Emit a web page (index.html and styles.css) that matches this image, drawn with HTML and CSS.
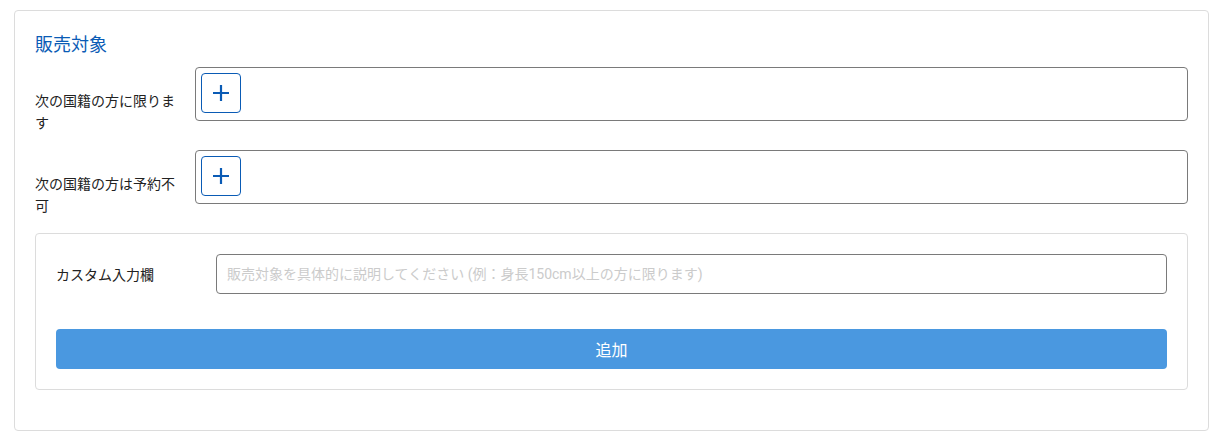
FILE: index.html
```html
<!DOCTYPE html>
<html lang="ja">
<head>
<meta charset="utf-8">
<link rel="stylesheet" href="styles.css">
</head>
<body>
<div class="card">
  <h2 class="title">販売対象</h2>
  <div class="row">
    <div class="label">次の国籍の方に限ります</div>
    <div class="tagbox">
      <button class="plus" type="button" aria-label="追加">
        <svg width="20" height="20" viewBox="0 0 20 20"><path d="M10 2v16M2 10h16" stroke="#0a5bb5" stroke-width="2.2" fill="none"/></svg>
      </button>
    </div>
  </div>
  <div class="row">
    <div class="label">次の国籍の方は予約不可</div>
    <div class="tagbox">
      <button class="plus" type="button" aria-label="追加">
        <svg width="20" height="20" viewBox="0 0 20 20"><path d="M10 2v16M2 10h16" stroke="#0a5bb5" stroke-width="2.2" fill="none"/></svg>
      </button>
    </div>
  </div>
  <div class="inner">
    <div class="field">
      <div class="flabel">カスタム入力欄</div>
      <input class="input" type="text" placeholder="販売対象を具体的に説明してください (例：身長150cm以上の方に限ります)">
    </div>
    <button class="add" type="button">追加</button>
  </div>
</div>
</body>
</html>
```
FILE: styles.css
```css
* { box-sizing: border-box; }
body {
  margin: 0;
  padding: 10px 16px 10px 14px;
  background: #fff;
  font-family: Roboto, "Noto Sans CJK JP", "Noto Sans", sans-serif;
  color: #222;
}
.card {
  border: 1px solid #dcdcdc;
  border-radius: 4px;
  padding: 20px;
  height: 421px;
}
.title {
  margin: 0 0 8px 0;
  font-size: 18px;
  font-weight: 400;
  line-height: 28px;
  color: #0a5bb5;
}
.row {
  display: flex;
  align-items: flex-start;
  margin-bottom: 16px;
}
.label {
  width: 160px;
  flex: none;
  padding-right: 15px;
  padding-top: 23px;
  font-size: 14px;
  line-height: 22px;
  color: #222;
}
.tagbox {
  flex: 1;
  height: 54px;
  border: 1px solid #7a7a7a;
  border-radius: 4px;
  padding: 5px;
  display: flex;
  align-items: flex-start;
}
.plus {
  width: 40px;
  height: 40px;
  border: 1px solid #0a5bb5;
  border-radius: 4px;
  background: #fff;
  padding: 0;
  display: flex;
  align-items: center;
  justify-content: center;
}
.inner {
  border: 1px solid #dcdcdc;
  border-radius: 4px;
  padding: 20px;
}
.field {
  display: flex;
  align-items: center;
  margin-bottom: 35px;
}
.flabel {
  width: 160px;
  flex: none;
  font-size: 14px;
  color: #222;
}
.input {
  flex: 1;
  height: 40px;
  border: 1px solid #7a7a7a;
  border-radius: 4px;
  padding: 0 10px;
  font-family: inherit;
  font-size: 14px;
  color: #222;
  outline: none;
}
.input::placeholder { color: #cbcbcb; }
.add {
  display: block;
  width: 100%;
  height: 40px;
  border: none;
  border-radius: 4px;
  background: #4a98e0;
  color: #fff;
  font-family: inherit;
  font-size: 16px;
}
```
